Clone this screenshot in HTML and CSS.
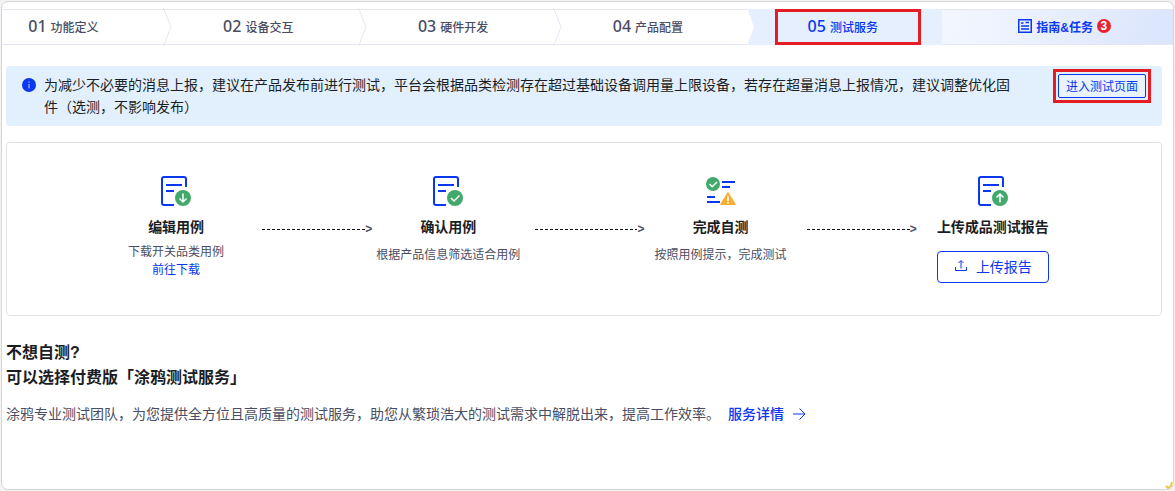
FILE: index.html
```html
<!DOCTYPE html>
<html lang="zh-CN">
<head>
<meta charset="utf-8">
<title>测试服务</title>
<link rel="stylesheet" href="styles.css">
</head>
<body>
<div class="page">
  <nav class="tabs">
    <a class="tab tab-first" href="#define"><span class="num">01</span>功能定义<svg class="sep" viewBox="0 0 9 38"><path d="M0.500 0L8 19L0.500 38"/></svg></a>
    <a class="tab" href="#device"><span class="num">02</span>设备交互<svg class="sep" viewBox="0 0 9 38"><path d="M0.500 0L8 19L0.500 38"/></svg></a>
    <a class="tab" href="#hardware"><span class="num">03</span>硬件开发<svg class="sep" viewBox="0 0 9 38"><path d="M0.500 0L8 19L0.500 38"/></svg></a>
    <a class="tab" href="#config"><span class="num">04</span>产品配置<svg class="sep sep-solid" viewBox="0 0 9 38"><path d="M0 0L7 19L0 38Z"/></svg></a>
    <a class="tab tab-active" href="#test"><span class="num">05</span>测试服务<span class="mark mark-tab"></span></a>
    <a class="guide" href="#guide">
      <svg class="guide-icon" viewBox="0 0 14 14"><path d="M0.750 0.750H13.250V13.250H0.750ZM3 4H5.500M7.500 3.500H11M3 7H11M3 10H11"/></svg>
      <span>指南&amp;任务</span><span class="badge">3</span>
    </a>
  </nav>
  <main class="content">
    <section class="notice">
      <svg class="info" viewBox="0 0 14 14"><circle cx="7" cy="7" r="7" fill="#0a37f0"/><path d="M7 6V10.500M7 3.500V4.800" stroke="#c5d4ff"/></svg>
      <p class="notice-text">为减少不必要的消息上报，建议在产品发布前进行测试，平台会根据品类检测存在超过基础设备调用量上限设备，若存在超量消息上报情况，建议调整优化固件（选测，不影响发布）</p>
      <div class="enter-wrap"><button class="enter" type="button">进入测试页面</button><span class="mark mark-enter"></span></div>
    </section>
    <section class="flow">
      <div class="step">
        <svg class="step-icon" viewBox="0 0 32 32"><path class="doc" d="M14 30H4Q2 30 2 28V4Q2 2 4 2H24Q26 2 26 4V12M6 10H22M6 16H14"/><circle class="ok" cx="23" cy="23" r="8"/><path class="tick" d="M23 18.500V27M19.500 23.500L23 27L26.500 23.500"/></svg>
        <h3>编辑用例</h3>
        <p class="desc desc-link">下载开关品类用例<br><a href="#download">前往下载</a></p>
      </div>
      <div class="arrow"><i class="dash"></i>&gt;</div>
      <div class="step">
        <svg class="step-icon" viewBox="0 0 32 32"><path class="doc" d="M14 30H4Q2 30 2 28V4Q2 2 4 2H24Q26 2 26 4V12M6 10H22M6 16H14"/><circle class="ok" cx="23" cy="23" r="8"/><path class="tick" d="M19 23L22 26L27.500 20.500"/></svg>
        <h3>确认用例</h3>
        <p class="desc">根据产品信息筛选适合用例</p>
      </div>
      <div class="arrow"><i class="dash"></i>&gt;</div>
      <div class="step">
        <svg class="step-icon" viewBox="0 0 32 32"><circle class="ok" cx="8" cy="9" r="7"/><path class="tick" d="M4.500 9L7.200 11.800L12 7"/><path class="doc" d="M17 7H30M17 12H25M2 22H10M2 27H15"/><path d="M23 17.500L30.500 29.500H15.500Z" fill="#f6ae35" stroke="#f6ae35" stroke-linejoin="round"/><path class="tick" d="M23 21V26M23 27V28.500"/></svg>
        <h3>完成自测</h3>
        <p class="desc">按照用例提示，完成测试</p>
      </div>
      <div class="arrow"><i class="dash"></i>&gt;</div>
      <div class="step">
        <svg class="step-icon" viewBox="0 0 32 32"><path class="doc" d="M14 30H4Q2 30 2 28V4Q2 2 4 2H24Q26 2 26 4V12M6 10H22M6 16H14"/><circle class="ok" cx="23" cy="23" r="8"/><path class="tick" d="M23 27.500V19M19.500 22.500L23 19L26.500 22.500"/></svg>
        <h3>上传成品测试报告</h3>
        <button class="upload" type="button"><svg viewBox="0 0 14 14"><path d="M1.500 8V11.500H12.500V8M7 9.500V2M4.500 4L7 1.500L9.500 4"/></svg>上传报告</button>
      </div>
    </section>
    <section class="paid">
      <h2>不想自测?<br>可以选择付费版「涂鸦测试服务」</h2>
      <p>涂鸦专业测试团队，为您提供全方位且高质量的测试服务，助您从繁琐浩大的测试需求中解脱出来，提高工作效率。<a href="#detail">服务详情<svg viewBox="0 0 14 14"><path d="M1 7H13M7.500 1.500L13 7L7.500 12.500"/></svg></a></p>
    </section>
  </main>
  <svg class="corner" viewBox="0 0 8 8"><path d="M1 5L3 7L6 5L7 1" /></svg>
</div>
</body>
</html>
```
FILE: styles.css
```css
* { box-sizing: border-box; }
body {
  margin: 0;
  padding: 1px;
  background: #f3f3f3;
  color: #1b1d24;
  font-family: "Liberation Sans", "Noto Sans CJK SC", sans-serif;
  font-size: 14px;
}
h2, h3, p { margin: 0; }
a { color: #0a37f0; text-decoration: none; }
svg { fill: none; flex: none; }
button { font-family: inherit; color: #0a37f0; border: 1px solid #0a37f0; cursor: pointer; }

.page {
  position: relative;
  min-height: calc(100vh - 2px);
  padding-top: 7px;
  background: #fff;
  border: 1px solid #d6d6d6;
  border-radius: 7px;
}

.tabs {
  display: grid;
  grid-template-columns: 161fr repeat(4, 195fr) 231fr;
  height: 36px;
}
.tab {
  position: relative;
  display: flex;
  align-items: center;
  justify-content: center;
  gap: 4px;
  padding: 0 4px 2px 0;
  border: solid #e4e6f3;
  border-width: 1px 0;
  color: #4a4d63;
  font-size: 12px;
  font-weight: 500;
  white-space: nowrap;
}
.tab-first { padding-right: 38px; }
.tab-active { background: #e5effd; border-color: #e5effd; color: #0a37f0; z-index: 0; }
.num { font-family: "Noto Sans", sans-serif; font-size: 16px; }
.sep { position: absolute; z-index: 1; right: -9px; top: -2px; width: 9px; height: 38px; stroke: #e4e6f3; }
.sep-solid { fill: #fff; stroke: none; }
.guide {
  display: flex;
  align-items: center;
  justify-content: center;
  gap: 4px;
  padding: 0 0 2px 14px;
  background: linear-gradient(100deg, #f4f7ff, #dae5fc);
  border: solid #e4e6f3;
  border-width: 1px 0;
  font-size: 12px;
  font-weight: bold;
}
.guide-icon { width: 14px; height: 14px; stroke: #0a37f0; stroke-width: 1.5; }
.badge {
  width: 14px;
  height: 14px;
  border-radius: 50%;
  background: #e62432;
  color: #fff;
  line-height: 14px;
  text-align: center;
}
.mark { position: absolute; border: 3px solid #e51c23; pointer-events: none; }
.mark-tab { inset: -1px 21px -1px 28px; }
.mark-enter { inset: -5px; }

.content { padding: 21px 11px 0 4px; }
.notice {
  display: flex;
  align-items: flex-start;
  padding: 8px 16px;
  background: #e2f0fe;
  border-radius: 4px;
}
.info { width: 14px; height: 14px; margin: 4px 8px 0 0; }
.notice-text { flex: 1; line-height: 22px; }
.enter-wrap { position: relative; margin-left: 40px; }
.enter {
  display: block;
  width: 88px;
  height: 24px;
  padding: 0 0 2px;
  border-radius: 2px;
  background: #e9f3fe;
  font-size: 12px;
}

.flow {
  display: flex;
  margin-top: 16px;
  padding: 32px 92px 32px 93px;
  border: 1px solid #e1e2e8;
  border-radius: 4px;
}
.step { flex: 1; display: flex; flex-direction: column; align-items: center; white-space: nowrap; }
.step-icon { width: 32px; height: 32px; }
.doc { stroke: #0a37f0; stroke-width: 2; }
.ok { fill: #42a86c; }
.tick { stroke: #fff; stroke-width: 1.5; }
.step h3 { margin-top: 8px; font-size: 14px; line-height: 24px; }
.desc { padding-top: 7px; color: #4a4d63; font-size: 12px; line-height: 18px; text-align: center; }
.desc-link { padding-top: 4px; }
.arrow {
  width: 120px;
  display: flex;
  align-items: center;
  height: 24px;
  margin-top: 42px;
  padding-left: 10px;
  color: #4a4d63;
  font-size: 12px;
  font-weight: bold;
}
.dash { flex: 1; height: 1px; background: repeating-linear-gradient(90deg, #111 0 3px, transparent 3px 5px); }
.upload {
  display: flex;
  align-items: center;
  gap: 8px;
  height: 32px;
  margin-top: 12px;
  padding: 0 16px 2px;
  border-radius: 4px;
  background: #fff;
  font-size: 14px;
}
.upload svg { width: 14px; height: 14px; stroke: #0a37f0; }

.paid { padding-top: 24px; }
.paid h2 { font-size: 16px; line-height: 25px; }
.paid p { margin-top: 13px; color: #4a4d63; line-height: 22px; }
.paid a { display: inline-flex; align-items: center; gap: 8px; margin-left: 8px; vertical-align: top; font-weight: 500; }
.paid a svg { width: 14px; height: 14px; stroke: #0a37f0; }
.corner { position: absolute; right: 0; bottom: 0; width: 8px; height: 8px; stroke: #f5c443; stroke-width: 2; }
```
